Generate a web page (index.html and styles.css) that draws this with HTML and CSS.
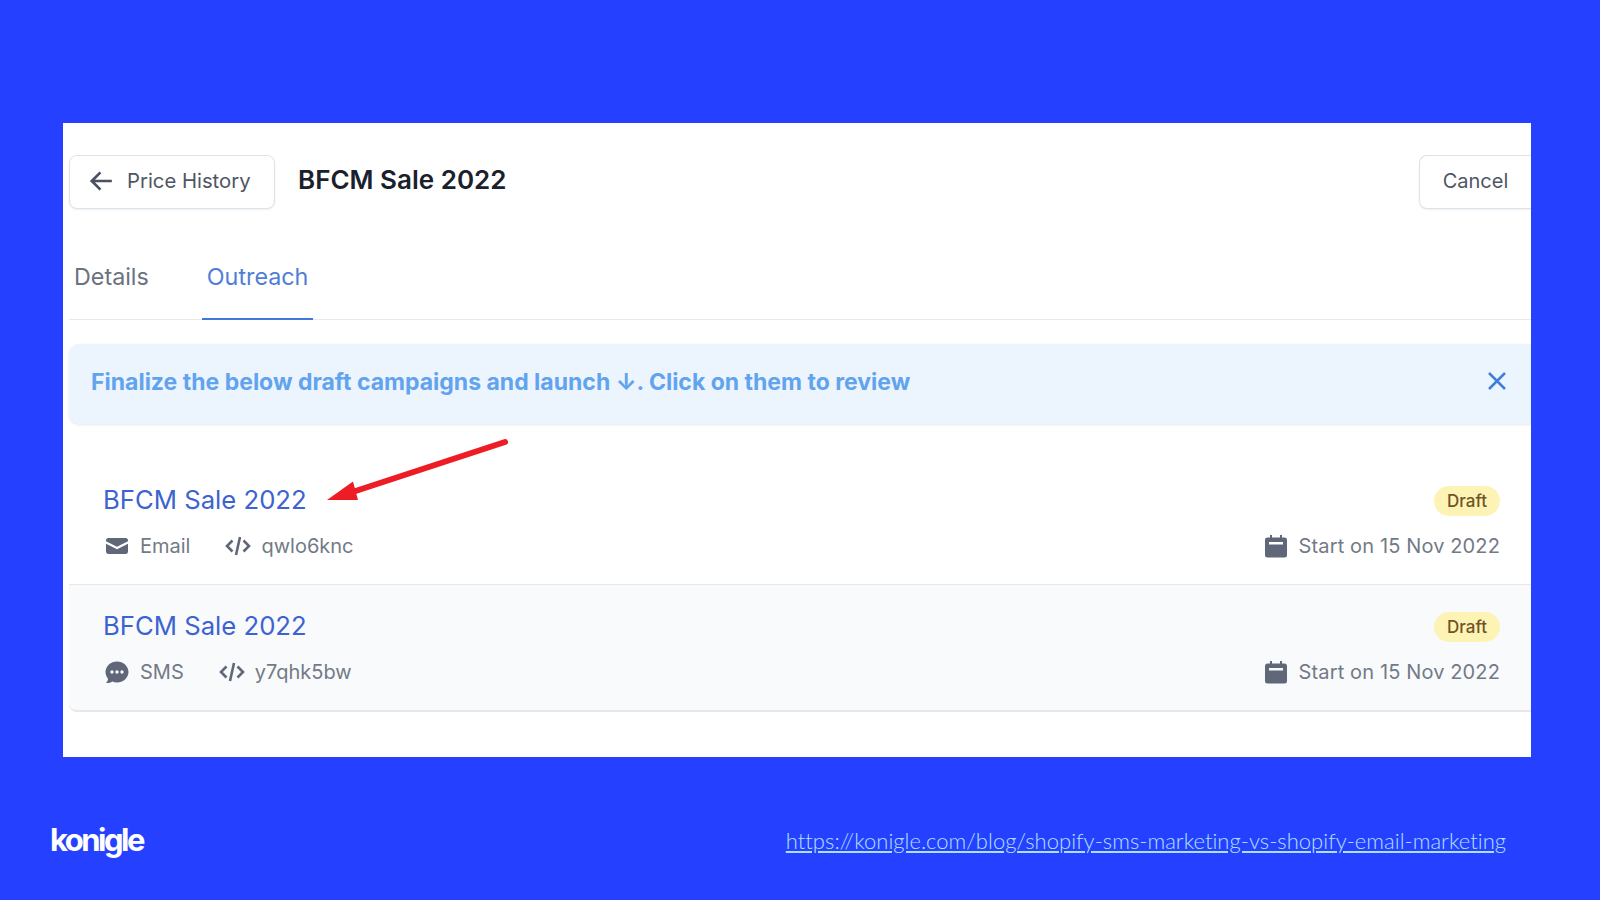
FILE: index.html
```html
<!DOCTYPE html>
<html lang="en">
<head>
  <meta charset="UTF-8">
  <title>BFCM Sale 2022</title>
  <link rel="stylesheet" href="styles.css">
</head>
<body>
  <div class="panel">
    <div class="topbar">
      <button class="btn back-btn">
        <svg class="back-icon" viewBox="0 0 24 24"><path d="M22 12H4M11.500 4L3.500 12l8 8"/></svg>
        Price History
      </button>
      <h1>BFCM Sale 2022</h1>
      <button class="btn cancel-btn">Cancel</button>
    </div>

    <div class="tabs">
      <div class="tab">Details</div>
      <div class="tab active">Outreach</div>
    </div>

    <div class="notice">
      <span>Finalize the below draft campaigns and launch ↓. Click on them to review</span>
      <svg class="close-icon" viewBox="0 0 20 20"><path d="M2 2l16 16M18 2L2 18"/></svg>
    </div>

    <div class="campaigns">
      <div class="campaign">
        <div class="row">
          <a class="name">BFCM Sale 2022</a>
          <span class="badge">Draft</span>
        </div>
        <div class="row meta">
          <div class="meta-left">
            <span class="meta-item">
              <svg class="icon" viewBox="0 0 24 24"><path d="M1 6.500A2.500 2.500 0 0 1 3.500 4h17A2.500 2.500 0 0 1 23 6.500v.7l-11 5.600L1 7.200z"/><path d="M1 9.700l11 5.600 11-5.600v8A2.500 2.500 0 0 1 20.500 20h-17A2.500 2.500 0 0 1 1 17.700z"/></svg>
              Email
            </span>
            <span class="meta-item">
              <svg class="icon code" viewBox="0 0 26 24"><path d="M7.500 6.500L2 12l5.500 5.500M18.500 6.500L24 12l-5.500 5.500M15 3l-4 18"/></svg>
              qwlo6knc
            </span>
          </div>
          <span class="meta-item date">
            <svg class="icon" viewBox="0 0 24 24"><path fill-rule="evenodd" d="M6 1h2v2.500h8V1h2v2.500h2.500A2.500 2.500 0 0 1 23 6v15a2.500 2.500 0 0 1-2.500 2.500h-17A2.500 2.500 0 0 1 1 21V6a2.500 2.500 0 0 1 2.500-2.500H6zM5 8v2.500h14V8z"/></svg>
            Start on 15 Nov 2022
          </span>
        </div>
      </div>

      <div class="campaign shaded">
        <div class="row">
          <a class="name">BFCM Sale 2022</a>
          <span class="badge">Draft</span>
        </div>
        <div class="row meta">
          <div class="meta-left">
            <span class="meta-item">
              <svg class="icon" viewBox="0 0 24 24"><path fill-rule="evenodd" d="M12 1.500c6.300 0 11.500 4.700 11.500 10.500S18.300 22.500 12 22.500c-1.700 0-3.300-.3-4.700-1-1.800 1.100-3.900 1.700-6.300 1.500 1.200-1.200 1.900-2.700 2-4.300C1.500 16.800.5 14.500.5 12 .5 6.200 5.700 1.500 12 1.500zM7 10.300a1.700 1.700 0 1 0 0 3.400 1.700 1.700 0 0 0 0-3.400zm5 0a1.700 1.700 0 1 0 0 3.400 1.700 1.700 0 0 0 0-3.400zm5 0a1.700 1.700 0 1 0 0 3.400 1.700 1.700 0 0 0 0-3.400z"/></svg>
              SMS
            </span>
            <span class="meta-item">
              <svg class="icon code" viewBox="0 0 26 24"><path d="M7.500 6.500L2 12l5.500 5.500M18.500 6.500L24 12l-5.500 5.500M15 3l-4 18"/></svg>
              y7qhk5bw
            </span>
          </div>
          <span class="meta-item date">
            <svg class="icon" viewBox="0 0 24 24"><path fill-rule="evenodd" d="M6 1h2v2.500h8V1h2v2.500h2.500A2.500 2.500 0 0 1 23 6v15a2.500 2.500 0 0 1-2.500 2.500h-17A2.500 2.500 0 0 1 1 21V6a2.500 2.500 0 0 1 2.500-2.500H6zM5 8v2.500h14V8z"/></svg>
            Start on 15 Nov 2022
          </span>
        </div>
      </div>
    </div>

    <svg class="arrow" viewBox="0 0 200 80"><path class="arrow-line" d="M182 5L28 55.500"/><path class="arrow-head" d="M4 63L30 44.500 35 63z"/></svg>
  </div>

  <div class="footer">
    <div class="logo">konigle</div>
    <a class="link">https://konigle.com/blog/shopify-sms-marketing-vs-shopify-email-marketing</a>
  </div>
</body>
</html>
```

FILE: styles.css
```css
body { margin: 0; height: 900px; overflow: hidden; background: #2540ff; font-family: 'Inter', sans-serif; }

.panel {
  position: relative; box-sizing: border-box; overflow: hidden;
  width: 1468px; height: 634px; margin: 123px 0 0 63px;
  padding-left: 6px; background: #fff;
}

.topbar { display: flex; align-items: center; height: 53px; padding-top: 32px; }
h1 { margin: 0 0 4px 23px; font-size: 26px; font-weight: 600; color: #1a202c; }
.btn {
  box-sizing: border-box; height: 54px; padding-bottom: 2px; background: #fff;
  border: 1.5px solid #dfe2e6; border-radius: 8px;
  font-family: inherit; font-size: 20px; color: #4f5663;
  box-shadow: 0 1px 2px #edf0f3;
}
.back-btn { display: flex; align-items: center; gap: 13px; width: 206px; padding: 0 0 2px 18px; font-size: 20.300px; }
.back-icon { width: 26px; height: 26px; fill: none; stroke: #4a5160; stroke-width: 2.500; }
.cancel-btn { width: 112px; margin-left: auto; border-right: none; border-radius: 8px 0 0 8px; }

.tabs { display: flex; height: 82px; margin-top: 30px; border-bottom: 1.5px solid #e7e9ec; box-sizing: border-box; }
.tab {
  display: flex; align-items: center; box-sizing: border-box; height: 82px;
  padding: 0 5px 3px; font-size: 23.300px; color: #6b7280;
  border-bottom: 2.500px solid transparent;
}
.tab.active { margin-left: 48px; color: #4f7ed8; border-bottom-color: #3f78d6; }

.notice {
  display: flex; align-items: center; justify-content: space-between;
  box-sizing: border-box; height: 80px; margin-top: 24px; padding: 0 24px 4px 22px;
  background: #ecf4fe; border-radius: 10px 0 0 10px;
  box-shadow: 0 1px 3px #e4e8ee;
  font-size: 23px; font-weight: 700; color: #62a3ee;
}
.close-icon { width: 20px; height: 20px; margin-bottom: 2px; fill: none; stroke: #3f7fd8; stroke-width: 2.500; }

.campaigns { margin-top: 35px; }
.campaign { box-sizing: border-box; height: 126px; padding: 22px 31px 0 34px; border-bottom: 1.5px solid #e6e8ec; }
.campaign.shaded { height: 127px; background: #f8fafc; border-bottom-width: 2px; border-radius: 0 0 0 8px; }
.row { display: flex; align-items: center; justify-content: space-between; }
.name { font-size: 25.700px; color: #3c63cf; line-height: 38px; }
.badge { margin-top: 2px; padding: 2px 13px; background: #fdf3b5; border-radius: 16px; font-size: 17px; line-height: 26px; font-weight: 500; color: #705425; }
.meta { margin-top: 9px; font-size: 20px; color: #737a86; }
.meta-left { display: flex; gap: 35px; padding-left: 2px; }
.meta-item { display: flex; align-items: center; gap: 10px; line-height: 36px; }
.meta-item:first-child { gap: 11px; }
.date { gap: 11px; letter-spacing: 0.130px; }
.icon { width: 24px; height: 24px; fill: #5f6778; }
.icon.code { width: 26px; fill: none; stroke: #5f6778; stroke-width: 2.600; }

.arrow { position: absolute; left: 260px; top: 314px; width: 200px; height: 80px; overflow: visible; }
.arrow-line { fill: none; stroke: #ee1c25; stroke-width: 6px; stroke-linecap: round; }
.arrow-head { fill: #ee1c25; }

.footer { display: flex; align-items: center; justify-content: space-between; margin-top: 63px; padding: 0 94px 0 50px; }
.logo { font-size: 31px; font-weight: 700; letter-spacing: -2.500px; color: #fff; line-height: 40px; }
.link { font-family: 'Lato', sans-serif; font-weight: 300; font-size: 22px; letter-spacing: 0.020px; color: #b0e0ff; text-decoration: underline; }
```
